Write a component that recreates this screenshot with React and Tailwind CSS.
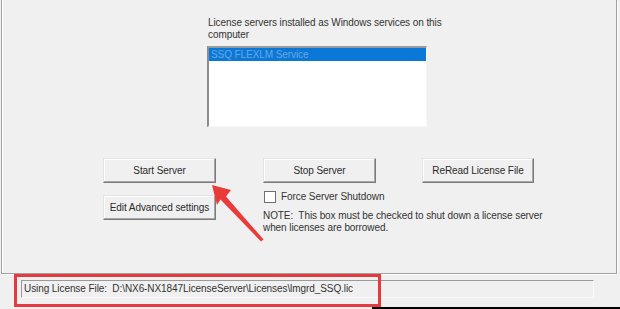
import React from 'react';

const Btn = ({ children, className = '' }) => (
  <div
    className={`h-[25px] flex items-center justify-center bg-[#f0f0f0] border border-t-[#e3e3e3] border-l-[#e3e3e3] border-b-[#7a7a7a] border-r-[#7a7a7a] shadow-[inset_-1px_-1px_0_#a8a8a8,inset_1px_1px_0_#ffffff] text-[10px] text-[#2b2b2b] ${className}`}
  >
    {children}
  </div>
);

const App = () => {
  return (
    <div className="relative w-[620px] h-[309px] overflow-hidden bg-[#f0f0f0] font-['Liberation_Sans',Arial,sans-serif] tracking-[-0.08px] text-[#333333] flex flex-col">
      {/* group box, top edge is off-screen */}
      <div className="ml-px w-[616px] h-[274px] shrink-0 border-l border-r border-b border-[#a0a0a0] shadow-[inset_1px_0_0_#ffffff,1px_1px_0_#ffffff]">
        <div className="ml-[205px] pt-[17px]">
          <div className="pl-px w-[240px] text-[10px] leading-[12px]">
            License servers installed as Windows services on this computer
          </div>
          <div className="mt-[5px] w-[220px] h-[81px] bg-white border-t-2 border-l-2 border-b border-r border-t-[#9a9a9a] border-l-[#8c8c8c] border-b-[#f6f6f6] border-r-[#f6f6f6]">
            <div className="h-[13px] bg-[#0a78d7] pl-[2px] text-[10px] leading-[13px] text-[#6aa6e4]">
              SSQ FLEXLM Service
            </div>
          </div>
        </div>

        <div className="ml-[101px] mt-[31px] flex">
          <div className="w-[113px] flex flex-col gap-[12px]">
            <Btn>Start Server</Btn>
            <Btn>Edit Advanced settings</Btn>
          </div>
          <div className="ml-[47px] flex flex-col">
            <div className="flex">
              <Btn className="w-[113px]">Stop Server</Btn>
              <Btn className="ml-[46px] w-[112px]">ReRead License File</Btn>
            </div>
            <div className="mt-[8px] flex items-center">
              <div className="ml-px w-[12px] h-[12px] bg-white border border-[#6e6e6e]" />
              <span className="ml-[5px] text-[10px] leading-[12px]">Force Server Shutdown</span>
            </div>
            <div className="mt-[7px] text-[10px] leading-[12px] whitespace-pre">
              {'NOTE:  This box must be checked to shut down a license server\nwhen licenses are borrowed.'}
            </div>
          </div>
        </div>
      </div>

      {/* status field */}
      <div className="ml-[21px] mt-[6px] w-[573px] h-[18px] border-t border-l border-b border-r border-t-[#9a9a9a] border-l-[#9a9a9a] border-b-[#fafafa] border-r-[#fafafa] pl-[2px] text-[10px] leading-[16px] whitespace-pre">
        {'Using License File:  D:\\NX6-NX1847LicenseServer\\Licenses\\lmgrd_SSQ.lic'}
      </div>

      <div className="mt-auto flex justify-end">
        <div className="w-[248px] h-[2px] bg-black" />
      </div>

      {/* annotation overlays */}
      <div className="absolute left-[14px] top-[274px] w-[367px] h-[33px] border-[3px] border-[#e53b3f]" />
      <svg className="absolute inset-0" width="620" height="309" viewBox="0 0 620 309">
        <polygon
          points="212,185 231,190 226,196.5 263.5,239.5 261,241.5 220.5,199.5 217,205"
          fill="#ea3b3b"
        />
      </svg>
    </div>
  );
};

export default App;
